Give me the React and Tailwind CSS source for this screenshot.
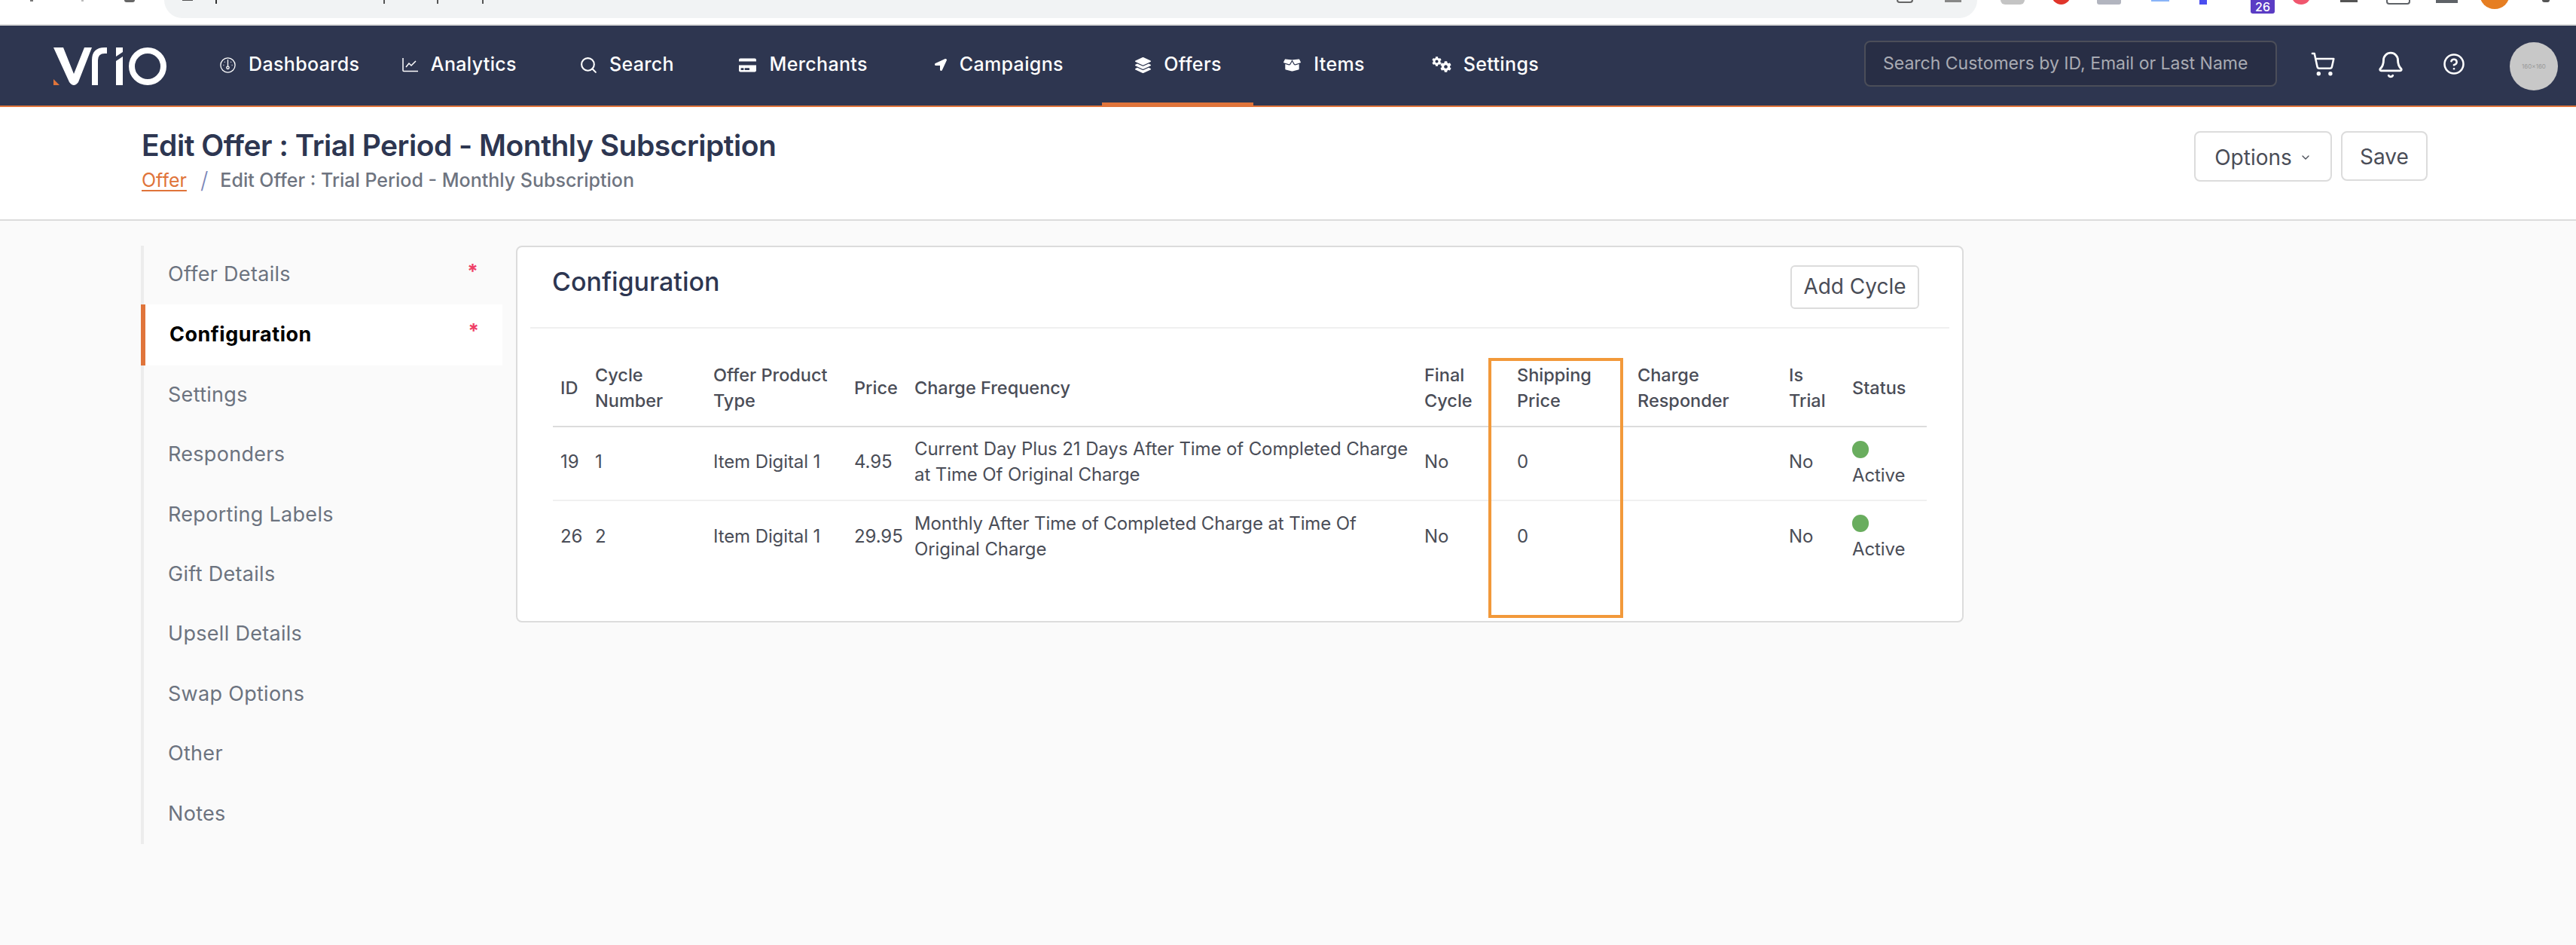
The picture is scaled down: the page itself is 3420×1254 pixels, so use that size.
import React from "react";
import { Search, ShoppingCart, Bell, CircleHelp, ChevronDown } from "lucide-react";
import { FaLayerGroup, FaBoxOpen, FaLocationArrow, FaCreditCard, FaCog } from "react-icons/fa";

const Gauge = () => (
  <svg width="21" height="21" viewBox="0 0 21 21" fill="none" stroke="white" strokeWidth="1.3">
    <circle cx="10.5" cy="10.5" r="9.6" />
    <path d="M10.5 3v9" />
    <circle cx="10.5" cy="13.8" r="1.7" />
    <path d="M4.5 10.5h.8M15.7 10.5h.8M6 6l.6.6M15 6l-.6.6" />
  </svg>
);
const Chart = () => (
  <svg width="21" height="20" viewBox="0 0 21 20" fill="none" stroke="white" strokeWidth="1.5">
    <path d="M1 1v16.5a1 1 0 0 0 1 1h19" />
    <path d="M5 13l4-5 3 3 6-6" />
  </svg>
);
const Gears = () => (
  <span className="flex w-[25px] h-[22px] items-start">
    <FaCog className="text-white text-[13px] shrink-0" />
    <FaCog className="text-white text-[15px] mt-[6px] -ml-[2px] shrink-0" />
  </span>
);

function Logo() {
  return (
    <svg width="150" height="50" viewBox="0 0 150 50" className="shrink-0">
      <path fill="white" d="M0 0H13L27 35L41 0H51L33 46Q30 50 27 50Q24 50 21 46Z" />
      <path fill="white" d="M51 50V17Q51 0 68 0H71V8H68Q59 8 59 17V50Z" />
      <path fill="white" d="M83 50V18L92 12V50Z" />
      <path fill="white" d="M83 0H92V6L83 12Z" />
      <circle cx="125" cy="25" r="21" fill="none" stroke="white" strokeWidth="8" />
      <path fill="#e0743a" d="M0 50V42L8 50Z" />
    </svg>
  );
}

const sideItems = ["Offer Details", "Configuration", "Settings", "Responders", "Reporting Labels", "Gift Details", "Upsell Details", "Swap Options", "Other", "Notes"];

export default function App() {
  return (
    <div className="w-[3420px] h-[1254px] overflow-hidden bg-[#fafafa] flex flex-col font-['Inter',sans-serif]">
      {/* browser chrome remnant */}
      <div className="h-[34px] shrink-0 bg-white border-b-2 border-[#dcdcdc] overflow-hidden flex items-start">
        <div className="flex items-start w-[218px] shrink-0">
          <span className="ml-[40px] w-[4px] h-[2px] bg-[#777]" />
          <span className="ml-[64px] w-[3px] h-[2px] bg-[#bbb]" />
          <span className="ml-[54px] w-[14px] h-[3px] rounded-b-full bg-[#666]" />
        </div>
        <div className="w-[2407px] shrink-0 h-[24px] bg-[#f1f3f4] rounded-b-[28px] flex items-start">
          <span className="ml-[24px] w-[14px] h-[1px] bg-[#555]" />
          <span className="ml-[30px] w-[2px] h-[5px] bg-[#333]" />
          <span className="ml-[221px] w-[2px] h-[5px] bg-[#555]" />
          <span className="ml-[69px] w-[2px] h-[5px] bg-[#555]" />
          <span className="ml-[58px] w-[2px] h-[5px] bg-[#555]" />
          <span className="ml-[1876px] w-[22px] h-[4px] rounded-b-[4px] border-x-2 border-b-2 border-[#666]" />
          <span className="ml-[42px] w-[22px] h-[3px] bg-[#888]" />
        </div>
        <span className="ml-[31px] w-[32px] h-[6px] rounded-b-[6px] bg-[#c4c4c4]" />
        <span className="ml-[36px] w-[25px] h-[25px] -mt-[19px] rounded-full bg-[#e0352b]" />
        <span className="ml-[35px] w-[32px] h-[6px] rounded-b-[3px] bg-[#b2b5bf]" />
        <span className="ml-[40px] w-[24px] h-[2px] bg-[#8ab4f8]" />
        <span className="ml-[40px] w-[10px] h-[6px] bg-[#4a4ef0]" />
        <span className="ml-[58px] w-[32px] h-[18px] rounded-b-[3px] bg-[#5b3cc4] text-white text-[16px] leading-[18px] text-center font-medium">26</span>
        <span className="ml-[22px] w-[26px] h-[26px] -mt-[20px] rounded-full bg-[#f0566e]" />
        <span className="ml-[39px] w-[23px] h-[3px] bg-[#555]" />
        <span className="ml-[38px] w-[32px] h-[6px] rounded-b-[4px] border-x-2 border-b-2 border-[#5f6368]" />
        <span className="ml-[34px] w-[29px] h-[4px] bg-[#5f6368]" />
        <span className="ml-[29px] w-[40px] h-[40px] -mt-[28px] rounded-full bg-[#e67e22]" />
        <span className="ml-[43px] w-[10px] h-[3px] rounded-b-full bg-[#555]" />
      </div>

      {/* nav */}
      <nav className="h-[108px] shrink-0 bg-[#2e3650] border-b-2 border-[#e0743a] flex items-center text-white">
        <div className="ml-[71px] mt-[2px] w-[176px] shrink-0"><Logo /></div>
        <div className="flex h-full self-stretch text-[25px] font-medium tracking-[0.35px]">
          <NavItem icon={<Gauge />} label="Dashboards" cls="pl-[45px] pr-[12px]" />
          <NavItem icon={<Chart />} label="Analytics" cls="pl-[44.5px] pr-[40.5px]" />
          <NavItem icon={<Search size={25} strokeWidth={2} className="-mx-[2px]" />} label="Search" cls="pl-[44.5px] pr-[42px]" />
          <NavItem icon={<FaCreditCard className="text-[23px]" />} label="Merchants" />
          <NavItem icon={<FaLocationArrow className="text-[16px]" />} label="Campaigns" cls="pl-[44.5px] pr-[51px]" />
          <NavItem icon={<FaLayerGroup className="text-[21px]" />} label="Offers" cls="pl-[44.5px] pr-[42.5px]" active />
          <NavItem icon={<FaBoxOpen className="text-[23px]" />} label="Items" cls="pl-[40px] pr-[44.5px]" />
          <NavItem icon={<Gears />} label="Settings" />
        </div>
        <div className="flex-1" />
        <div className="w-[548px] h-[61px] mb-[5px] bg-[#282e45] border-2 border-[#4b4e59] rounded-[8px] flex items-center pl-[23px] text-[23px] text-[#a9abb3] whitespace-nowrap">
          Search Customers by ID, Email or Last Name
        </div>
        <ShoppingCart size={34} strokeWidth={1.8} className="ml-[44px] mb-[4px]" />
        <Bell size={38} strokeWidth={1.8} className="ml-[54px] mb-[2px]" />
        <CircleHelp size={30} strokeWidth={2} className="ml-[50px] mb-[4px]" />
        <div className="ml-[59px] mr-[24px] mt-[2px] w-[64px] h-[64px] rounded-full bg-[#c8c8c8] flex items-center justify-center text-[8px] text-[#999]">160×160</div>
      </nav>

      {/* page header */}
      <header className="h-[151px] shrink-0 bg-white border-b-2 border-[#dcdcdc] flex justify-between pl-[188px] pr-[197px]">
        <div className="pt-[27px]">
          <h1 className="text-[39px] leading-[48px] font-semibold text-[#2d3651] tracking-[-0.5px] whitespace-nowrap">Edit Offer : Trial Period - Monthly Subscription</h1>
          <div className="flex items-center mt-[4px] text-[25px] leading-[36px]">
            <a className="text-[#e0743a] underline underline-offset-4">Offer</a>
            <span className="ml-[18px] text-[#7b86b8] font-light text-[30px]">/</span>
            <span className="ml-[16px] text-[#6e7480] font-medium whitespace-nowrap">Edit Offer : Trial Period - Monthly Subscription</span>
          </div>
        </div>
        <div className="flex gap-[12px] pt-[32px] text-[#4a4d57] text-[28px]">
          <button className="w-[183px] h-[67px] pt-[2px] bg-white border-2 border-[#dcdcdc] rounded-[8px] flex items-center justify-center gap-[10px]">
            Options <ChevronDown size={16} strokeWidth={2} />
          </button>
          <button className="w-[115px] h-[66px] pt-[2px] bg-white border-2 border-[#dcdcdc] rounded-[8px]">Save</button>
        </div>
      </header>

      {/* body */}
      <main className="flex items-start pl-[187px] pt-[33px]">
        <ul className="w-[480px] shrink-0 h-[794px] border-l-4 border-[#ececec]">
          {sideItems.map((s, i) => (
            i === 1 ? (
              <li key={s} className="h-[81px] -ml-[4px] mt-[-1px] pb-[2px] bg-white border-l-[6px] border-[#e0743a] flex items-center justify-between pl-[32px] pr-[31px]">
                <span className="text-[27px] tracking-[0.5px] font-bold text-black">{s}</span>
                <span className="text-[26px] text-[#ef3e66] font-bold leading-none mb-[10px]">*</span>
              </li>
            ) : (
              <li key={s} className="h-[79.4px] pb-[2px] flex items-center justify-between pl-[32px] pr-[32px] text-[27px] tracking-[0.3px] text-[#6c737f]">
                <span>{s}</span>
                {i === 0 && <span className="text-[#ef3e66] text-[26px] font-bold leading-none mb-[10px]">*</span>}
              </li>
            )
          ))}
        </ul>

        <section className="relative ml-[18px] w-[1922px] h-[500px] bg-white border-2 border-[#dcdcdc] rounded-[8px] px-[17px]">
          <div className="h-[108px] border-b-2 border-[#f0f0f0] flex justify-between pl-[29px] pr-[40px] pt-[24px]">
            <h2 className="text-[34px] leading-[44px] font-medium text-[#2d3651]">Configuration</h2>
            <button className="w-[171px] h-[58px] pb-[2px] border-2 border-[#dcdcdc] rounded-[6px] text-[28px] text-[#4a4d57]">Add Cycle</button>
          </div>
          <table className="mt-[28px] ml-[30px] w-[1824px] table-fixed text-[24px] tracking-[-0.1px] leading-[34px] text-[#4a4d57]">
            <colgroup>
              <col className="w-[46px]" /><col className="w-[157px]" /><col className="w-[187px]" /><col className="w-[80px]" /><col className="w-[677px]" />
              <col className="w-[123px]" /><col className="w-[160px]" /><col className="w-[201px]" /><col className="w-[84px]" /><col className="w-[109px]" />
            </colgroup>
            <thead>
              <tr className="h-[102px] border-b-2 border-[#dcdcdc] text-left text-[23.5px] tracking-normal [&>th]:pl-[10px] [&>th]:font-medium">
                <th>ID</th><th>Cycle<br />Number</th><th>Offer Product<br />Type</th><th>Price</th><th>Charge Frequency</th>
                <th>Final<br />Cycle</th><th>Shipping<br />Price</th><th>Charge<br />Responder</th><th>Is<br />Trial</th><th>Status</th>
              </tr>
            </thead>
            <tbody className="[&>tr>td]:pl-[10px] [&>tr>td:not(:last-child)]:pb-[4px]">
              <tr className="h-[98px] border-b-2 border-[#f0f0f0]">
                <td>19</td><td>1</td><td>Item Digital 1</td><td>4.95</td>
                <td>Current Day Plus 21 Days After Time of Completed Charge<br />at Time Of Original Charge</td>
                <td>No</td><td>0</td><td></td><td>No</td>
                <td className="pt-[2px]"><span className="block w-[22px] h-[23px] mb-[6px] rounded-full bg-[#69ad5e]" />Active</td>
              </tr>
              <tr className="h-[98px]">
                <td>26</td><td>2</td><td>Item Digital 1</td><td>29.95</td>
                <td>Monthly After Time of Completed Charge at Time Of<br />Original Charge</td>
                <td>No</td><td>0</td><td></td><td>No</td>
                <td className="pt-[2px]"><span className="block w-[22px] h-[23px] mb-[6px] rounded-full bg-[#69ad5e]" />Active</td>
              </tr>
            </tbody>
          </table>
          <div className="absolute left-[1289px] top-[147px] w-[179px] h-[345px] border-4 border-[#f2993a]" />
        </section>
      </main>
    </div>
  );
}

function NavItem({ icon, label, active, cls = "px-[44.5px]" }) {
  return (
    <div className={`relative flex items-center h-full pb-[2px] whitespace-nowrap ${cls}`}>
      <span className="flex items-center justify-center mr-[17px]">{icon}</span>
      {label}
      {active && <span className="absolute left-0 right-0 bottom-0 h-[4px] bg-[#e0743a]" />}
    </div>
  );
}
